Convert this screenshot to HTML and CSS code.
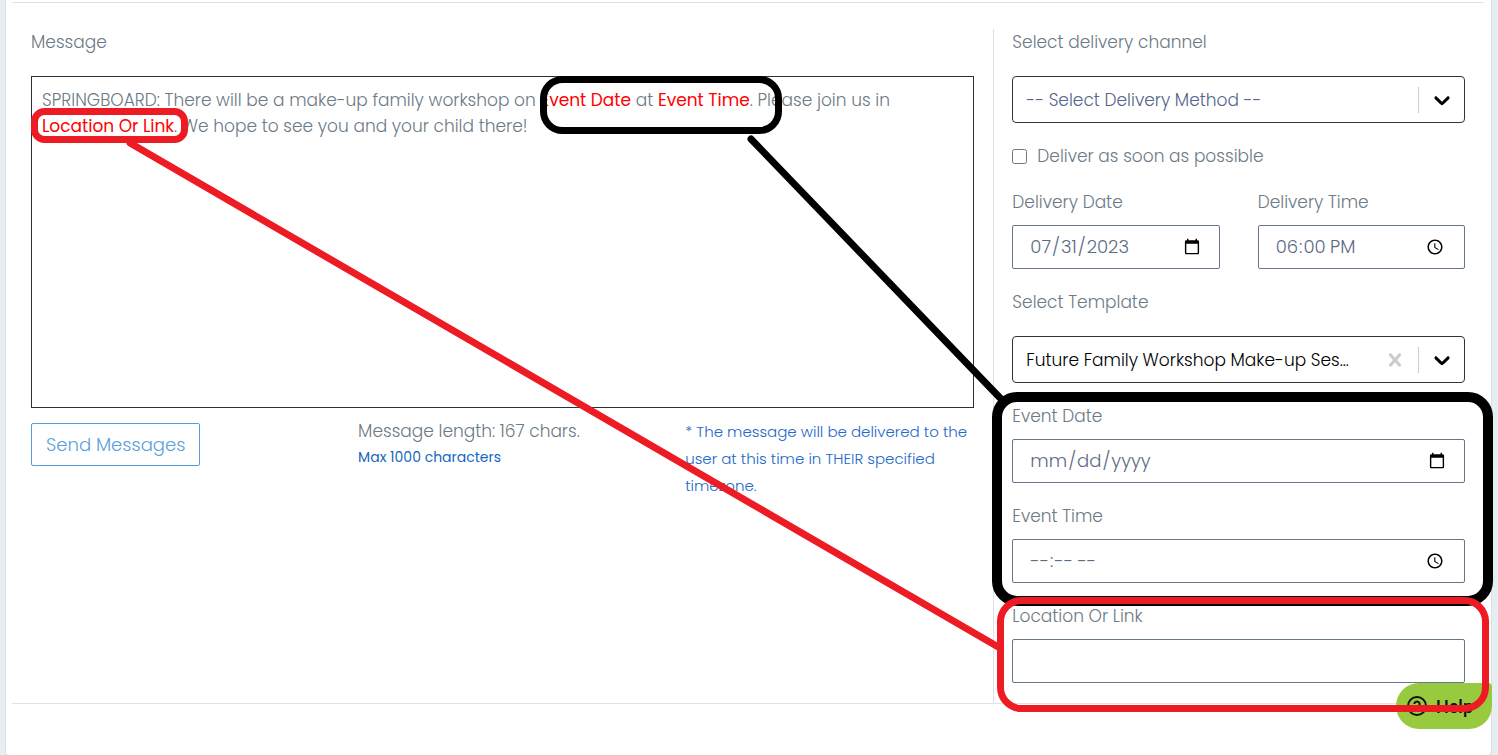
FILE: index.html
```
<!DOCTYPE html>
<html lang="en">

<head>
    <title>Send Messages</title>
    <meta charset="UTF-8">
    <link rel="stylesheet" href="styles.css">
</head>

<body>
    <main class="card">
        <form class="panel">
            <section class="message-col">
                <div class="label" id="message-label">Message</div>
                <div class="message-box" role="textbox" aria-multiline="true" aria-labelledby="message-label" contenteditable="true" spellcheck="false">SPRINGBOARD: There will be a make-up family workshop on <span class="token">Event Date</span> at <span class="token">Event Time</span>. Please join us in <br><span class="token">Location Or Link</span>. We hope to see you and your child there!</div>
                <div class="message-footer">
                    <div>
                        <button type="button" class="send">Send Messages</button>
                    </div>
                    <div class="length">
                        <p>Message length: 167 chars.</p>
                        <p class="max">Max 1000 characters</p>
                    </div>
                    <p class="note">* The message will be delivered to the user at this time in THEIR specified timezone.</p>
                </div>
            </section>

            <section class="options-col">
                <div class="field">
                    <label class="label" for="channel">Select delivery channel</label>
                    <div class="select">
                        <select id="channel" class="placeholder">
                            <option>-- Select Delivery Method --</option>
                        </select>
                        <span class="indicators">
                            <span class="separator"></span>
                            <svg class="arrow" viewBox="0 0 20 20"><path d="M4.516 7.548c0.436-0.446 1.043-0.481 1.576 0l3.908 3.747 3.908-3.747c0.533-0.481 1.141-0.446 1.574 0 0.436 0.445 0.408 1.197 0 1.615-0.406 0.418-4.695 4.502-4.695 4.502-0.217 0.223-0.502 0.335-0.787 0.335s-0.57-0.112-0.789-0.335c0 0-4.287-4.084-4.695-4.502s-0.436-1.17 0-1.615z"/></svg>
                        </span>
                    </div>
                </div>

                <label class="check">
                    <input type="checkbox">
                    Deliver as soon as possible
                </label>

                <div class="two-fields">
                    <div class="field">
                        <label for="delivery-date">Delivery Date</label>
                        <input type="date" id="delivery-date" value="2023-07-31">
                    </div>
                    <div class="field">
                        <label for="delivery-time">Delivery Time</label>
                        <input type="time" id="delivery-time" value="18:00">
                    </div>
                </div>

                <div class="field">
                    <label class="label" for="template">Select Template</label>
                    <div class="select">
                        <select id="template" class="clearable">
                            <option>Future Family Workshop Make-up Session</option>
                        </select>
                        <span class="indicators">
                            <svg class="clear" viewBox="0 0 20 20"><path d="M14.348 14.849c-0.469 0.469-1.229 0.469-1.697 0l-2.651-3.030-2.651 3.029c-0.469 0.469-1.229 0.469-1.697 0-0.469-0.469-0.469-1.229 0-1.697l2.758-3.15-2.759-3.152c-0.469-0.469-0.469-1.228 0-1.697s1.228-0.469 1.697 0l2.652 3.031 2.651-3.031c0.469-0.469 1.228-0.469 1.697 0s0.469 1.229 0 1.697l-2.758 3.152 2.758 3.15c0.469 0.469 0.469 1.229 0 1.698z"/></svg>
                            <span class="separator"></span>
                            <svg class="arrow" viewBox="0 0 20 20"><path d="M4.516 7.548c0.436-0.446 1.043-0.481 1.576 0l3.908 3.747 3.908-3.747c0.533-0.481 1.141-0.446 1.574 0 0.436 0.445 0.408 1.197 0 1.615-0.406 0.418-4.695 4.502-4.695 4.502-0.217 0.223-0.502 0.335-0.787 0.335s-0.57-0.112-0.789-0.335c0 0-4.287-4.084-4.695-4.502s-0.436-1.17 0-1.615z"/></svg>
                        </span>
                    </div>
                </div>

                <div class="field">
                    <label for="event-date">Event Date</label>
                    <input type="date" id="event-date">
                </div>
                <div class="field">
                    <label for="event-time">Event Time</label>
                    <input type="time" id="event-time">
                </div>
                <div class="field">
                    <label for="location">Location Or Link</label>
                    <input type="text" id="location">
                </div>
            </section>
        </form>
    </main>

    <button type="button" class="help">
        <svg viewBox="0 0 20 20" fill="none" stroke="currentColor" stroke-width="2">
            <circle cx="10" cy="10" r="9"/>
            <path d="M7.3 8a2.7 2.4 0 1 1 4.2 2c-1 .6-1.5 1-1.5 2M10 13.4v2"/>
        </svg>
        Help
    </button>

    <!-- marks that tie the message tokens to their fields -->
    <svg class="marks" viewBox="0 0 1498 755" aria-hidden="true">
        <g class="black">
            <rect x="543.5" y="79.5" width="235" height="51" rx="19"/>
            <path d="M751 139L1003 401"/>
            <rect class="thick" x="997" y="397" width="491" height="204" rx="20"/>
        </g>
        <g class="red">
            <rect x="34.5" y="111.5" width="150" height="28" rx="10"/>
            <path d="M130 143L1000 648"/>
            <rect x="1000.5" y="600.5" width="485" height="108" rx="21"/>
        </g>
    </svg>
</body>

</html>
```
FILE: styles.css
```
* {
    margin: 0;
    padding: 0;
    box-sizing: border-box;
}

body {
    font-family: Poppins, Inter, "Open Sans", sans-serif;
    font-size: 17px;
    font-weight: 300;
    line-height: 26px;
    color: #6c7a86;
    background: #e7eef2;
    position: relative;
}

.card {
    margin: 0 6px 0 5px;
    padding: 2px 7px 51px 6px;
    background: #fff;
    border: 1px solid #dbe0e4;
    border-top: none;
    border-radius: 0 0 5px 5px;
}

.panel {
    display: grid;
    grid-template-columns: 2fr 1fr;
    padding-top: 26px;
    border-top: 1px solid #dee2e6;
    border-bottom: 1px solid #dee2e6;
}

.message-col {
    min-width: 0;
    padding: 0 19px;
}

.options-col {
    display: flex;
    flex-direction: column;
    gap: 20px;
    min-width: 0;
    padding: 0 19px 20px 18px;
    border-left: 1px solid #dee2e6;
}

label {
    display: block;
    margin-bottom: 10px;
}

.label {
    margin-bottom: 21px;
}

.message-box {
    height: 332px;
    padding: 10px;
    border: 1px solid #263238;
    outline: none;
}

.token {
    color: #f00;
    font-weight: 400;
}

.message-footer {
    display: grid;
    grid-template-columns: repeat(3, 1fr);
    margin-right: -38px;
    padding-top: 10px;
}

.send {
    margin-top: 5px;
    padding: 0 14px;
    height: 43px;
    background: #fff;
    color: #5b9fdb;
    border: 1px solid #5b9bd5;
    border-radius: 2px;
    font: inherit;
    font-size: 18px;
    cursor: pointer;
}

.max {
    color: #1565c0;
    font-size: 14px;
    font-weight: 400;
    line-height: 27px;
}

.note {
    padding-right: 38px;
    color: #2468c8;
    font-size: 15px;
    line-height: 27px;
}

.select {
    position: relative;
}

select,
input[type="date"],
input[type="time"],
input[type="text"] {
    display: block;
    width: 100%;
    color: #5a6b85;
    background: #fff;
    font: inherit;
    outline: none;
}

select {
    appearance: none;
    height: 47px;
    padding: 0 60px 0 13px;
    color: #000;
    border: 1px solid #333;
    border-radius: 4px;
    text-overflow: ellipsis;
}

select.placeholder {
    color: #54648b;
}

select.clearable {
    padding-right: 112px;
}

/* clear, separator and arrow lie over the right end of the select */
.indicators {
    position: absolute;
    top: 0;
    right: 10px;
    height: 100%;
    display: flex;
    align-items: center;
    pointer-events: none;
}

.indicators svg {
    width: 26px;
    height: 26px;
}

.separator {
    width: 1px;
    height: 26px;
    margin: 0 10px;
    background: #ccc;
}

.arrow {
    fill: #000;
}

.clear {
    fill: #ccc;
}

input[type="date"],
input[type="time"],
input[type="text"] {
    height: 44px;
    padding: 0 16px;
    border: 1px solid #68768a;
    border-radius: 2px;
    font-size: 18px;
}

.check {
    display: flex;
    align-items: center;
    gap: 10px;
    margin: 0;
}

.check input {
    width: 15px;
    height: 15px;
}

.two-fields {
    display: grid;
    grid-template-columns: 1fr 1fr;
    gap: 38px;
}

.help {
    position: fixed;
    right: 6px;
    bottom: 26px;
    display: flex;
    align-items: center;
    gap: 9px;
    height: 46px;
    padding: 0 19px 0 11px;
    background: #98ca3f;
    color: #111;
    border: none;
    border-radius: 23px 4px 23px 23px;
    font-family: Roboto, sans-serif;
    font-size: 18px;
    font-weight: 500;
    cursor: pointer;
}

.help svg {
    width: 20px;
    height: 20px;
}

.marks {
    position: absolute;
    top: 0;
    left: 0;
    width: 100%;
    fill: none;
    stroke-width: 7px;
    stroke-linecap: round;
    pointer-events: none;
}

.black {
    stroke: #000;
}

.black .thick {
    stroke-width: 10px;
}

.red {
    stroke: #ed1c24;
}
```
